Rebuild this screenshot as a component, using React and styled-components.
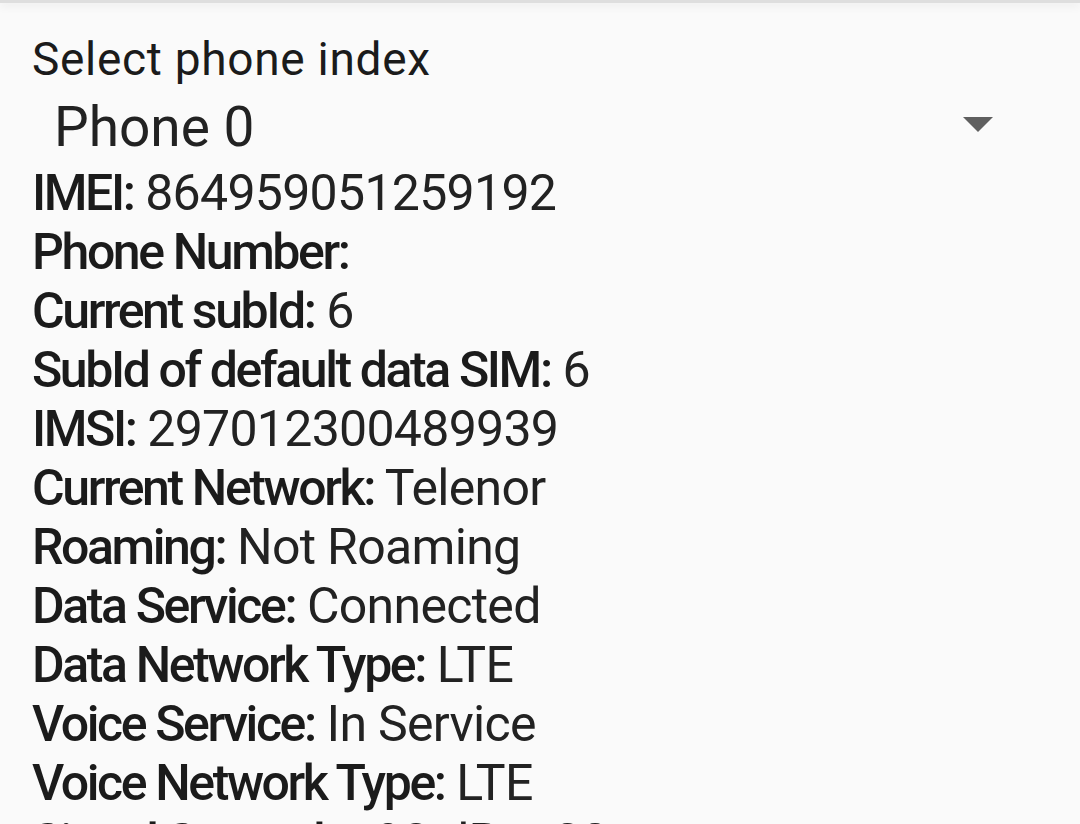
import React from 'react'
import styled, { createGlobalStyle } from 'styled-components'

const rows = [
  { label: 'IMEI', value: '864959051259192' },
  { label: 'Phone Number', value: '' },
  { label: 'Current subId', value: '6' },
  { label: 'SubId of default data SIM', value: '6' },
  { label: 'IMSI', value: '297012300489939' },
  { label: 'Current Network', value: 'Telenor' },
  { label: 'Roaming', value: 'Not Roaming' },
  { label: 'Data Service', value: 'Connected' },
  { label: 'Data Network Type', value: 'LTE' },
  { label: 'Voice Service', value: 'In Service' },
  { label: 'Voice Network Type', value: 'LTE' },
  { label: 'Signal Strength', value: '-98 dBm 32 asu' },
]

const GlobalStyle = createGlobalStyle`
  html, body {
    margin: 0;
    padding: 0;
    background: #fafafa;
    overflow: hidden;
  }
  body {
    font-family: Roboto, "Liberation Sans", sans-serif;
    color: #1b1b1b;
  }
`

const App = () => {
  return (
    <>
      <GlobalStyle />
      <Page>
        <TopEdge />
        <Content>
          <Title>Select phone index</Title>
          <Select>
            <SelectText>Phone 0</SelectText>
            <Arrow />
          </Select>
          <List>
            {rows.map(row => (
              <Row key={row.label}>
                <Label>{row.label}:</Label>
                {row.value && <Value> {row.value}</Value>}
              </Row>
            ))}
          </List>
        </Content>
      </Page>
    </>
  )
}

export default App

const Page = styled.div`
  width: 1080px;
  height: 824px;
  overflow: hidden;
  background: #fafafa;
`;

const TopEdge = styled.div`
  height: 3px;
  background: #dedede;
  box-shadow: 0 2px 10px rgba(0, 0, 0, 0.12);
`;

const Content = styled.div`
  padding: 0 32px;
`;

const Title = styled.div`
  font-size: 46px;
  line-height: 56px;
  margin-top: 28px;
  letter-spacing: 0.7px;
`;

const Select = styled.div`
  display: flex;
  align-items: center;
  justify-content: space-between;
  padding: 0 55px 0 22px;
  height: 60px;
  margin: 10px 0 7px;
`;

const SelectText = styled.span`
  font-size: 55px;
  color: #222;
`;

const Arrow = styled.span`
  width: 0;
  height: 0;
  margin-top: -6px;
  border-left: 15px solid transparent;
  border-right: 15px solid transparent;
  border-top: 15px solid #5f5f5f;
`;

const List = styled.div`
  display: flex;
  flex-direction: column;
`;

const Row = styled.div`
  font-size: 50px;
  line-height: 59px;
  white-space: nowrap;
`;

const Label = styled.span`
  font-weight: 500;
  letter-spacing: -2.4px;
`;

const Value = styled.span`
  font-weight: 400;
  letter-spacing: -0.7px;
  color: #222;
`;
